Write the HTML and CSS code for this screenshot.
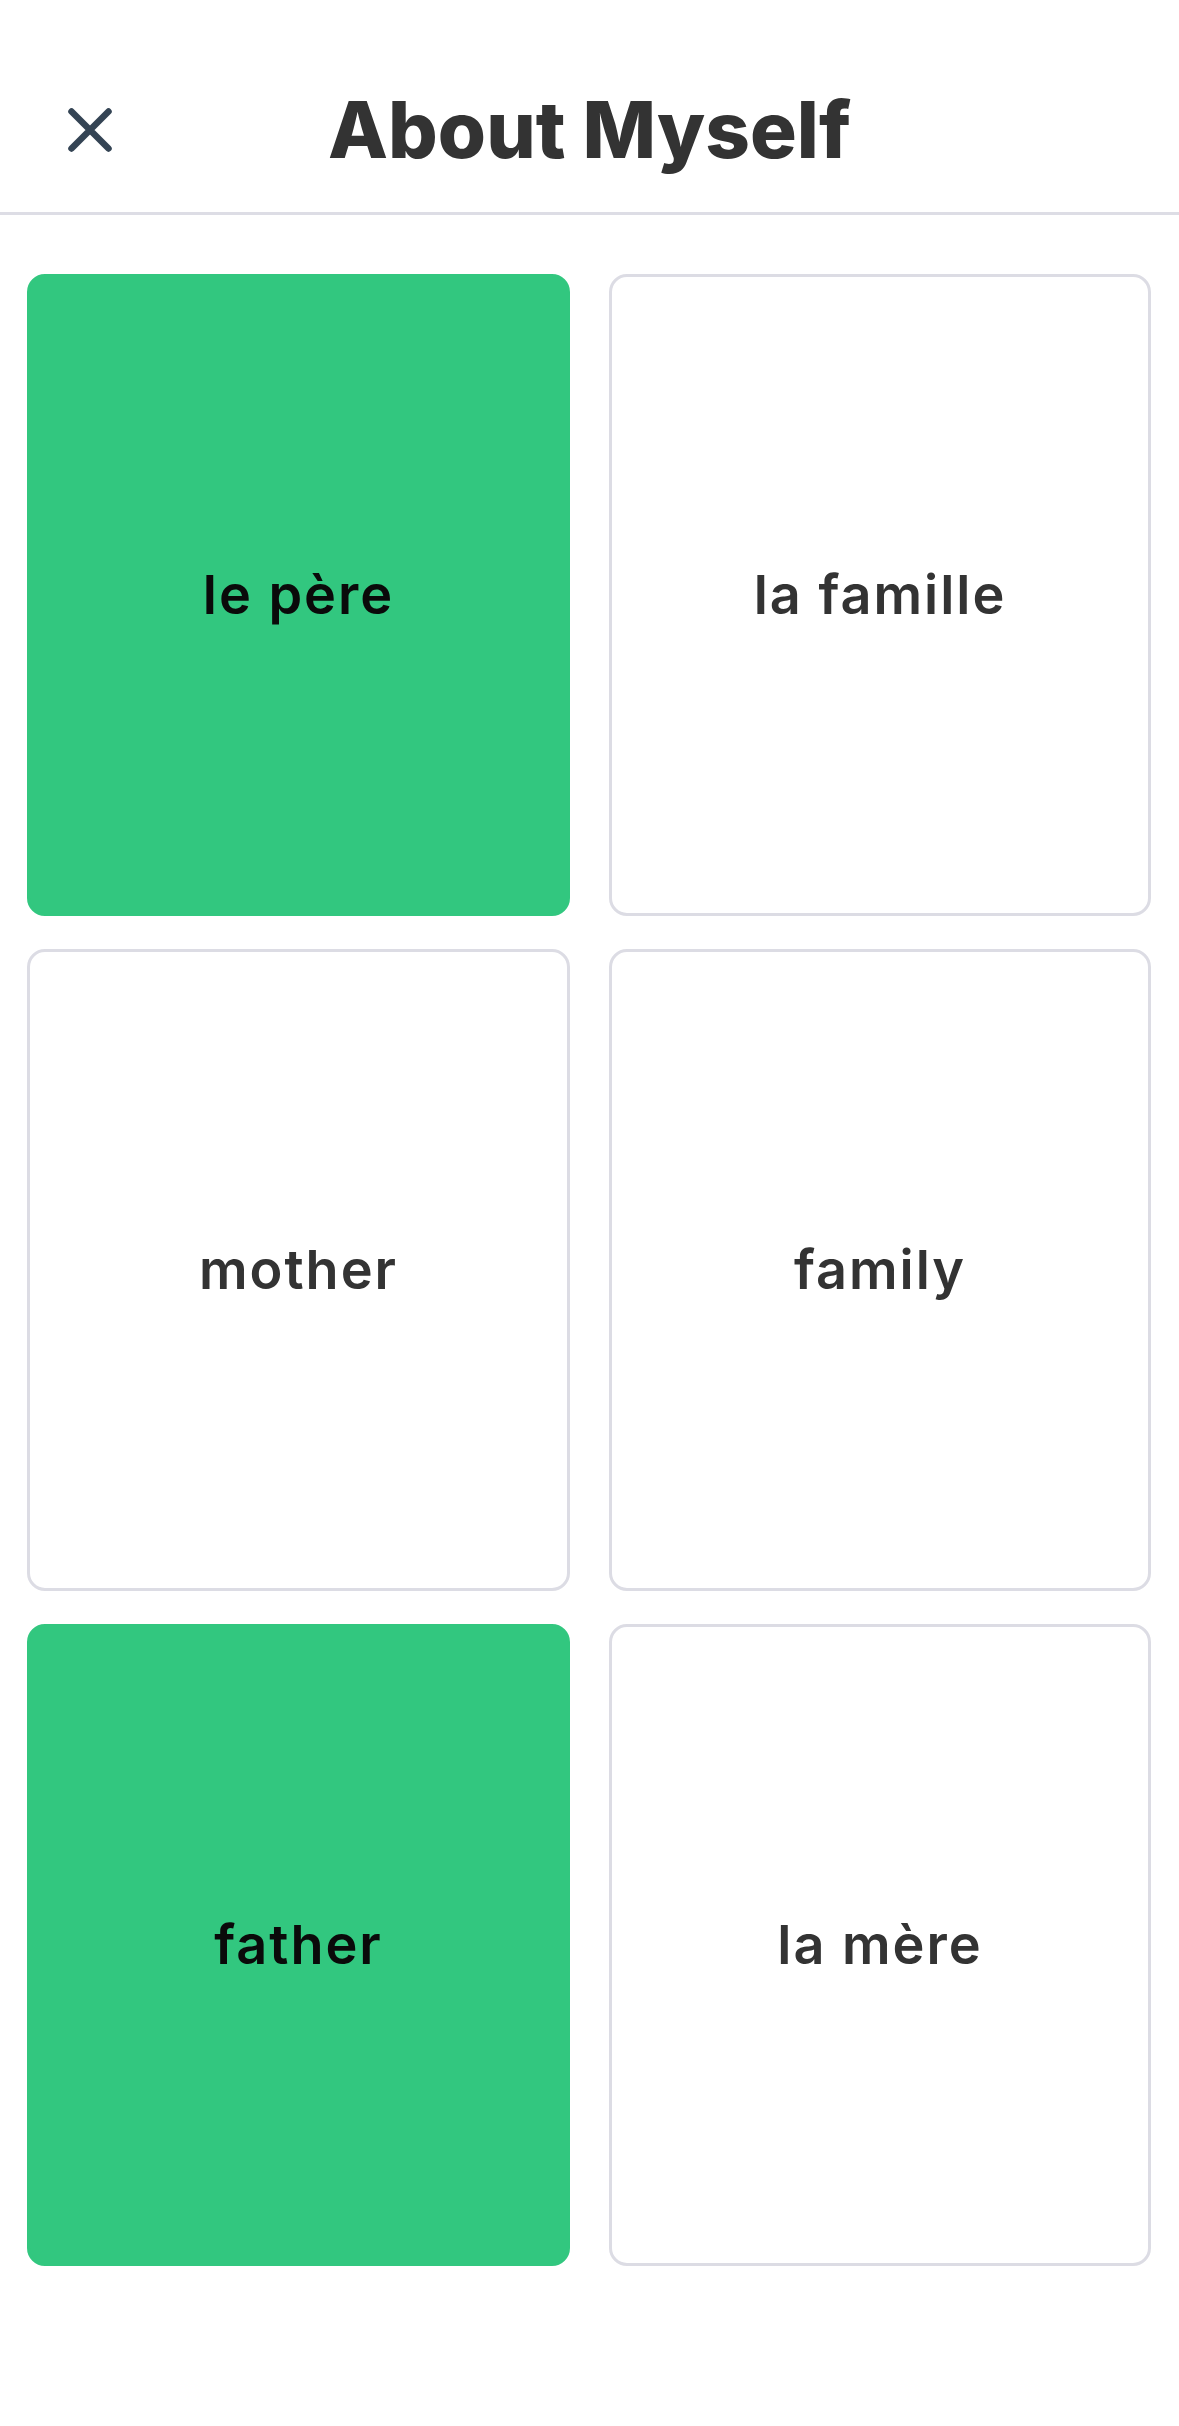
FILE: index.html
```html
<!DOCTYPE html>
<html lang="en">
<head>
<meta charset="utf-8">
<title>About Myself</title>
<link rel="stylesheet" href="styles.css">
</head>
<body>
<header class="topbar">
  <div class="topbar-left">
    <button class="close-btn" aria-label="Close">
      <svg viewBox="0 0 50 50" width="50" height="50" aria-hidden="true">
        <path d="M6.5 6.5 L43.5 43.5 M43.5 6.5 L6.5 43.5" fill="none" stroke="#344454" stroke-width="6.5" stroke-linecap="round"/>
      </svg>
    </button>
  </div>
  <h1 class="title">About Myself</h1>
  <div class="topbar-right"></div>
</header>
<main class="cards">
  <div class="card card-selected"><span class="card-text">le père</span></div>
  <div class="card"><span class="card-text">la famille</span></div>
  <div class="card"><span class="card-text">mother</span></div>
  <div class="card"><span class="card-text">family</span></div>
  <div class="card card-selected"><span class="card-text">father</span></div>
  <div class="card"><span class="card-text">la mère</span></div>
</main>
</body>
</html>
```
FILE: styles.css
```css
* {
  box-sizing: border-box;
}

html, body {
  margin: 0;
  padding: 0;
  background: #ffffff;
}

body {
  font-family: "Inter", "Open Sans", "Liberation Sans", sans-serif;
  color: #333333;
  width: 1179px;
  min-height: 2426px;
}

.topbar {
  display: grid;
  grid-template-columns: 1fr auto 1fr;
  align-items: center;
  height: 215px;
  padding-top: 48px;
  border-bottom: 3px solid #dddde5;
}

.topbar-left {
  display: flex;
  align-items: center;
  padding-left: 65px;
}

.close-btn {
  display: flex;
  align-items: center;
  justify-content: center;
  width: 50px;
  height: 50px;
  padding: 0;
  margin: 0;
  border: none;
  background: transparent;
}

.close-btn svg {
  display: block;
}

.title {
  margin: 0;
  font-size: 78px;
  font-weight: 800;
  line-height: 1.21;
  color: #333333;
  letter-spacing: 0;
  white-space: nowrap;
}

.cards {
  display: grid;
  grid-template-columns: 543px 542px;
  grid-auto-rows: 642px;
  column-gap: 39px;
  row-gap: 33px;
  padding: 59px 28px 0 27px;
}

.card {
  display: flex;
  align-items: center;
  justify-content: center;
  border: 3px solid #dcdce4;
  border-radius: 18px;
  background: #ffffff;
}

.card-selected {
  background: #32c77f;
  border-color: #32c77f;
}

.card-text {
  font-size: 54px;
  font-weight: 600;
  line-height: 1.21;
  color: #333333;
  letter-spacing: 2px;
}

.card-selected .card-text {
  color: #0a0a0a;
}
```
